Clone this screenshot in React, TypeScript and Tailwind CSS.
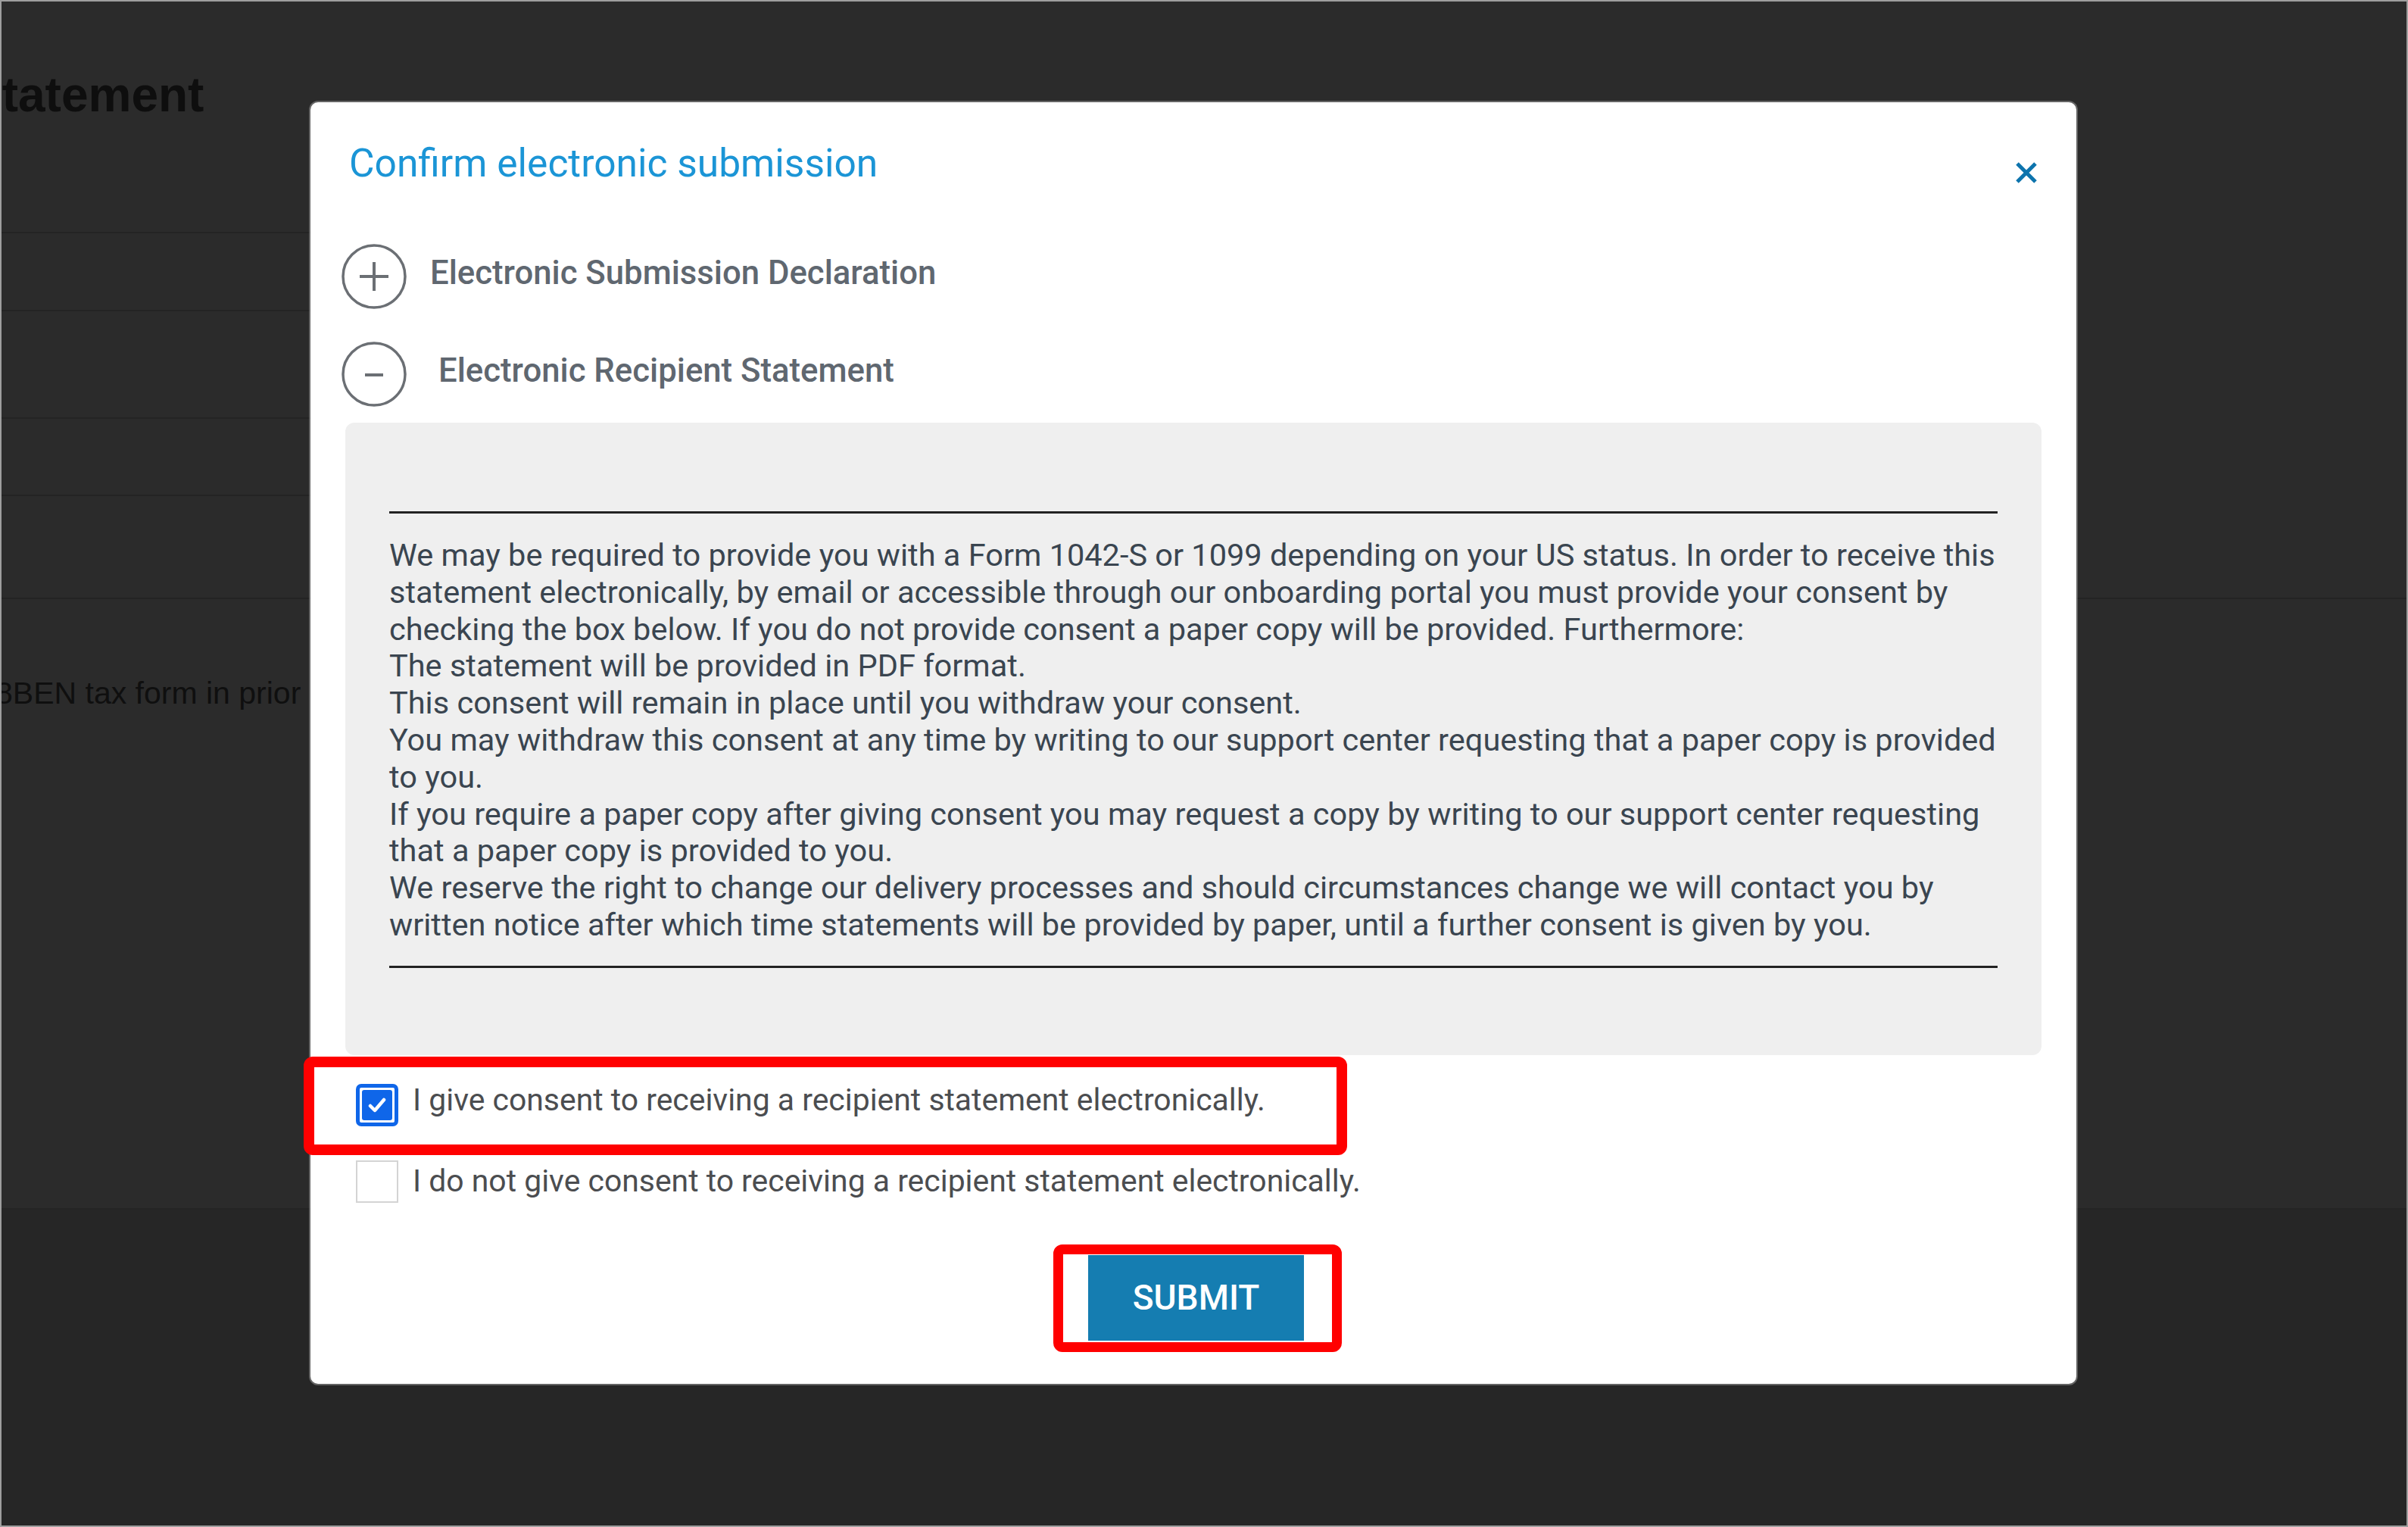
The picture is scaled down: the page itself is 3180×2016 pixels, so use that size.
import React from "react";

const bodyLines = [
  "We may be required to provide you with a Form 1042-S or 1099 depending on your US status. In order to receive this",
  "statement electronically, by email or accessible through our onboarding portal you must provide your consent by",
  "checking the box below. If you do not provide consent a paper copy will be provided. Furthermore:",
  "The statement will be provided in PDF format.",
  "This consent will remain in place until you withdraw your consent.",
  "You may withdraw this consent at any time by writing to our support center requesting that a paper copy is provided",
  "to you.",
  "If you require a paper copy after giving consent you may request a copy by writing to our support center requesting",
  "that a paper copy is provided to you.",
  "We reserve the right to change our delivery processes and should circumstances change we will contact you by",
  "written notice after which time statements will be provided by paper, until a further consent is given by you.",
];

function PlusCircle() {
  return (
    <svg width="86" height="86" viewBox="0 0 86 86" fill="none" stroke="#6b6f74">
      <circle cx="43" cy="43" r="41" strokeWidth="3.5" />
      <path d="M43 24V62M24 43H62" strokeWidth="4" />
    </svg>
  );
}

function MinusCircle() {
  return (
    <svg width="86" height="86" viewBox="0 0 86 86" fill="none" stroke="#6b6f74">
      <circle cx="43" cy="43" r="41" strokeWidth="3.5" />
      <path d="M31 44H55" strokeWidth="4" />
    </svg>
  );
}

function CloseX() {
  return (
    <svg width="30" height="30" viewBox="0 0 30 30" fill="none" stroke="#0d74ad" strokeWidth="5">
      <path d="M3 3L27 27M27 3L3 27" />
    </svg>
  );
}

export default function App() {
  return (
    <div className="relative w-[3180px] h-[2016px] overflow-hidden bg-[#2b2b2b] border-2 border-[#9e9e9e] font-['Roboto',sans-serif]">
      {/* background page */}
      <div className="flex flex-col h-full">
        <div className="border-b-2 border-[#242424]">
          <div className="w-[1700px]">
            <div className="h-[306px] border-b-2 border-[#242424] pt-[86px]">
              <h1 className="ml-[-42px] font-['Liberation_Sans',Arial,sans-serif] font-bold text-[64px] leading-[74px] text-[#0e0e0e] whitespace-nowrap">
                Statement
              </h1>
            </div>
            <div className="h-[103px] border-b-2 border-[#242424]" />
            <div className="h-[142px] border-b-2 border-[#242424]" />
            <div className="h-[102px] border-b-2 border-[#242424]" />
            <div className="h-[134px]" />
          </div>
        </div>
        <div className="h-[806px] border-b-2 border-[#242424] pt-[100px]">
          <p className="ml-[-8px] font-['Liberation_Sans',Arial,sans-serif] text-[41px] leading-[48px] text-[#0f0f0f] whitespace-nowrap">
            8BEN tax form in prior period
          </p>
        </div>
        <div className="flex-1 bg-[#262626]" />
      </div>

      {/* modal */}
      <div className="absolute left-[408px] top-[133px] w-[2332px] h-[1692px] bg-white rounded-[10px] shadow-[0_0_0_2px_rgba(150,150,150,0.55)] flex flex-col px-[46px] pt-[50px]">
        <div className="flex justify-between items-start">
          <h2 className="ml-[5px] text-[51.5px] leading-[61px] font-normal text-[#1b95d6] whitespace-nowrap">
            Confirm electronic submission
          </h2>
          <div className="mt-[28px] mr-[5px]">
            <CloseX />
          </div>
        </div>

        <div className="mt-[76px] ml-[-5px] flex items-center">
          <PlusCircle />
          <span className="ml-[31px] mb-[8px] text-[43.7px] font-medium text-[#5f6770] whitespace-nowrap">
            Electronic Submission Declaration
          </span>
        </div>
        <div className="mt-[43px] ml-[-5px] flex items-center">
          <MinusCircle />
          <span className="ml-[42px] mb-[8px] text-[43.7px] font-medium text-[#5f6770] whitespace-nowrap">
            Electronic Recipient Statement
          </span>
        </div>

        <div className="mt-[21px] h-[835px] bg-[#efefef] rounded-[12px] px-[58px] pt-[117px]">
          <div className="border-t-[3px] border-b-[3px] border-[#222222] pt-[31px] pb-[29px]">
            {bodyLines.map((l, i) => (
              <div key={i} className="text-[41.5px] leading-[48.8px] text-[#3a4550] whitespace-nowrap">
                {l}
              </div>
            ))}
          </div>
        </div>

        <div className="relative mt-[38px] h-[56px] flex items-center">
          <div className="absolute left-[-55px] top-[-36px] w-[1378px] h-[130px] border-[14px] border-[#ff0000] rounded-[12px]" />
          <div className="ml-[14px] w-[56px] h-[56px] rounded-[7px] border-[5px] border-[#0f66e9] bg-white p-[3px]">
            <div className="w-full h-full rounded-[3px] bg-[#0f66e9] flex items-center justify-center">
              <svg width="30" height="30" viewBox="0 0 30 30" fill="none" stroke="white" strokeWidth="4.5" strokeLinecap="round" strokeLinejoin="round">
                <path d="M6 16L12 22L24 8" />
              </svg>
            </div>
          </div>
          <span className="ml-[19px] mb-[12px] text-[40.9px] text-[#4b4d50] whitespace-nowrap">
            I give consent to receiving a recipient statement electronically.
          </span>
        </div>

        <div className="relative mt-[45px] h-[56px] flex items-center">
          <div className="ml-[14px] w-[56px] h-[56px] border-2 border-[#d4d4d4] bg-white" />
          <span className="ml-[19px] text-[40.9px] text-[#4b4d50] whitespace-nowrap">
            I do not give consent to receiving a recipient statement electronically.
          </span>
        </div>

        <div className="mt-[69px] flex justify-center pl-[7px]">
          <div className="relative">
            <div className="absolute left-[-46px] top-[-14px] w-[381px] h-[142px] border-[13px] border-[#ff0000] rounded-[12px]" />
            <button className="relative w-[285px] h-[113px] bg-[#157db1] text-white text-[46px] font-medium flex items-center justify-center">
              SUBMIT
            </button>
          </div>
        </div>
      </div>
    </div>
  );
}
